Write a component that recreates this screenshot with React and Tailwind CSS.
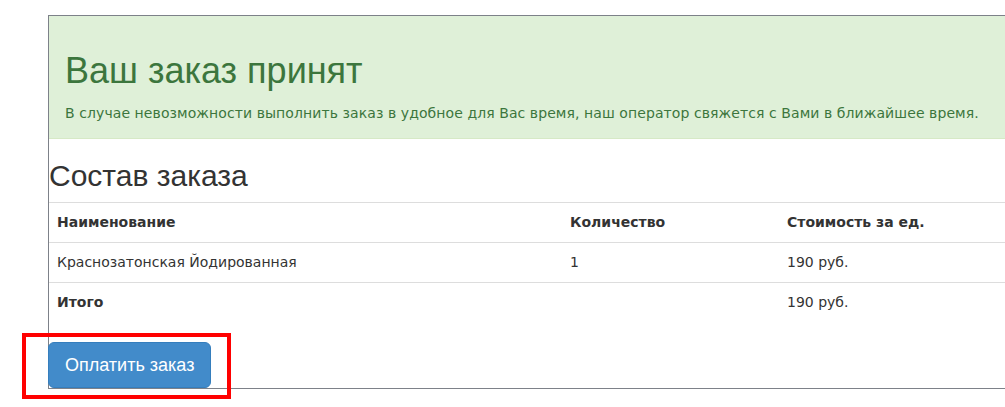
export default function App() {
  const rows = [
    { name: 'Краснозатонская Йодированная', qty: '1', price: '190 руб.' },
  ];

  return (
    <div className="relative h-[407px] w-[1005px] overflow-hidden bg-white text-[#333] font-['DejaVu_Sans',sans-serif] text-[14px] leading-[20px]">
      <div className="ml-[48px] mt-[15px] w-[1100px] border border-r-0 border-[#7d8189]">
        {/* Success alert */}
        <div className="border-b border-[#d6e9c6] bg-[#dff0d8] px-[16px] pt-[15px] pb-[15px] text-[#3c763d]">
          <h1 className="mt-[20px] mb-[12px] font-['Liberation_Sans',Arial,sans-serif] text-[36px] leading-[39.6px] font-normal">
            Ваш заказ принят
          </h1>
          <p className="m-0 tracking-[0.08px]">
            В случае невозможности выполнить заказ в удобное для Вас время, наш оператор свяжется с Вами в ближайшее время.
          </p>
        </div>

        <h2 className="mt-[20px] mb-[10px] font-['Liberation_Sans',Arial,sans-serif] text-[30px] leading-[33px] font-normal">
          Состав заказа
        </h2>

        {/* Order table */}
        <div className="grid grid-cols-[513px_217px_1fr]">
          <div className="flex h-[40px] items-center border-t border-[#ddd] px-[8px] font-bold">Наименование</div>
          <div className="flex h-[40px] items-center border-t border-[#ddd] px-[8px] font-bold">Количество</div>
          <div className="flex h-[40px] items-center border-t border-[#ddd] px-[8px] font-bold">Стоимость за ед.</div>

          {rows.map((r) => (
            <div key={r.name} className="contents">
              <div className="flex h-[40px] items-center border-t border-[#ddd] px-[8px]">{r.name}</div>
              <div className="flex h-[40px] items-center border-t border-[#ddd] px-[8px]">{r.qty}</div>
              <div className="flex h-[40px] items-center border-t border-[#ddd] px-[8px]">{r.price}</div>
            </div>
          ))}

          <div className="flex h-[40px] items-center border-t border-[#ddd] px-[8px] font-bold">Итого</div>
          <div className="flex h-[40px] items-center border-t border-[#ddd] px-[8px]"></div>
          <div className="flex h-[40px] items-center border-t border-[#ddd] px-[8px]">190 руб.</div>
        </div>

        <div className="mt-[20px]">
          <button className="-ml-px rounded-[6px] border border-[#357ebd] bg-[#428bca] px-[16px] py-[10px] font-['Liberation_Sans',Arial,sans-serif] text-[18px] leading-[24px] text-white">
            Оплатить заказ
          </button>
        </div>
      </div>

      {/* red annotation frame */}
      <div className="pointer-events-none absolute left-[22px] top-[333px] h-[66px] w-[209px] border-[4px] border-[#ff0000]"></div>
    </div>
  );
}
